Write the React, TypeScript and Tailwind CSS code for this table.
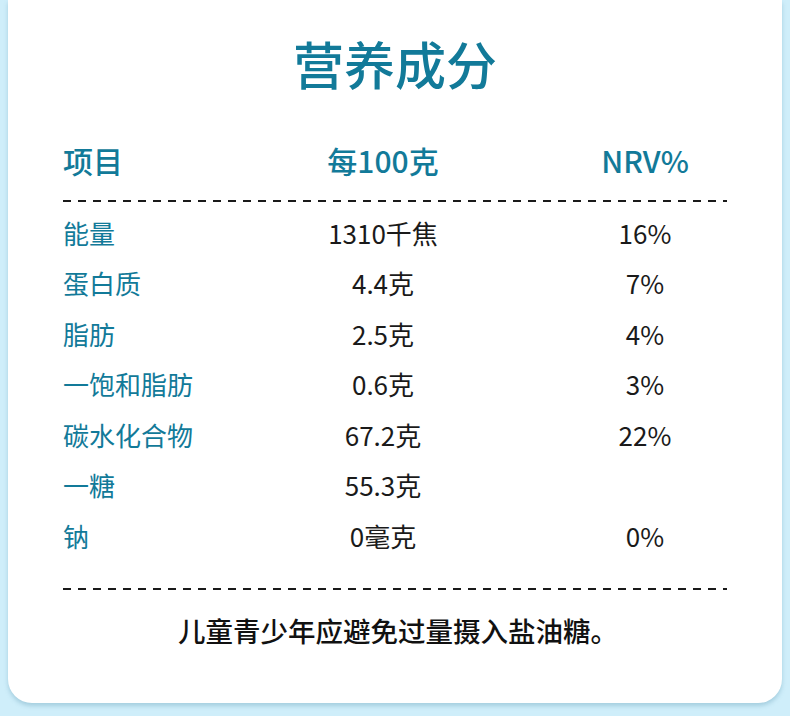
const rows = [
  { name: "能量", per: "1310千焦", nrv: "16%" },
  { name: "蛋白质", per: "4.4克", nrv: "7%" },
  { name: "脂肪", per: "2.5克", nrv: "4%" },
  { name: "一饱和脂肪", per: "0.6克", nrv: "3%" },
  { name: "碳水化合物", per: "67.2克", nrv: "22%" },
  { name: "一糖", per: "55.3克", nrv: "" },
  { name: "钠", per: "0毫克", nrv: "0%" },
];

function Dashes() {
  return (
    <div className="ml-[55px] w-[664px] h-[2px] bg-[repeating-linear-gradient(to_right,#1a1a1a_0_8px,transparent_8px_15px)]" />
  );
}

export default function App() {
  return (
    <div className="min-h-[716px] w-[790px] bg-[#cfeefa] px-[8px] pb-[13px] font-['Noto_Sans_CJK_SC','Noto_Sans',sans-serif]">
      <div className="rounded-b-[24px] bg-white pt-[38px] pb-[52px] shadow-[0_3px_4px_rgba(90,150,175,0.35)]">
        <h1 className="text-center text-[51px] leading-[50px] font-medium text-[#127a99]">营养成分</h1>

        <div className="mt-[50px] grid h-[40px] grid-cols-[190px_260px_264px] items-center pl-[55px] text-[30px] font-medium text-[#127a99]">
          <div>项目</div>
          <div className="text-center">每100克</div>
          <div className="text-center">NRV%</div>
        </div>

        <div className="mt-[22px]">
          <Dashes />
        </div>

        <div className="mt-[5px]">
          {rows.map((r) => (
            <div
              key={r.name}
              className="grid h-[50.5px] grid-cols-[190px_260px_264px] items-center pl-[55px] text-[26px]"
            >
              <div className="text-[#127a99]">{r.name}</div>
              <div className="text-center text-[#1a1a1a]">{r.per}</div>
              <div className="text-center text-[#1a1a1a]">{r.nrv}</div>
            </div>
          ))}
        </div>

        <div className="mt-[27.5px]">
          <Dashes />
        </div>

        <p className="mt-[21px] flex h-[40px] items-center justify-center pl-[6px] text-[27.5px] font-medium text-[#111]">
          儿童青少年应避免过量摄入盐油糖。
        </p>
      </div>
    </div>
  );
}
